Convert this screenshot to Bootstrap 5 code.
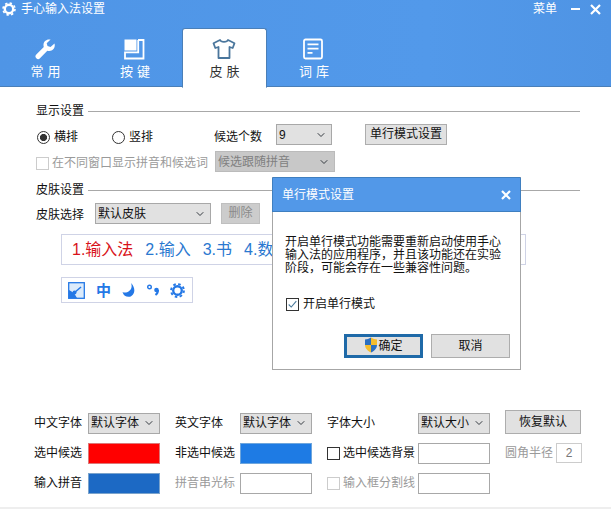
<!DOCTYPE html>
<html lang="zh-CN">
<head>
    <meta charset="UTF-8">
    <meta name="viewport" content="width=device-width, initial-scale=1.0">
    <title>手心输入法设置</title>
    <link href="https://cdn.jsdelivr.net/npm/bootstrap@5.3.1/dist/css/bootstrap.min.css" rel="stylesheet">
    <style>
        html, body {
            height: 509px;
            overflow: hidden;
        }

        body {
            font-family: "Liberation Sans", "Noto Sans CJK SC", sans-serif;
            font-size: 12px;
            line-height: 14px;
            color: #111;
            background: #fff;
            position: relative;
            border-bottom: 2px solid #eee;
        }

        /* header */
        .app-head {
            height: 87px;
            background: linear-gradient(90deg, #4f95e6, #5299ea 70%, #4f94e4);
            border-bottom: 1px solid #4a7fb8;
            color: #fff;
        }

        .title-row {
            height: 28px;
            padding: 0 10px 10px 2px;
        }

        .win-title { margin-left: 5px; }
        .win-min { margin-left: 14px; }
        .win-close { margin-left: 9px; }

        .tab-row {
            gap: 4.5px;
            padding-left: 3px;
            height: 59px;
        }

        .tab-row .nav-link {
            width: 85px;
            height: 60px;
            padding: 9px 0 0 4px;
            color: #fff;
            text-align: center;
            font-size: 13px;
            letter-spacing: 4px;
            border: 1px solid transparent;
            border-radius: 3px 3px 0 0;
        }

        .tab-row .nav-link svg {
            display: block;
            margin: 0 auto 5px;
            transform: translateX(-3px);
        }

        .tab-row .nav-link.active {
            background: #fff;
            color: #333;
            border-color: #4a7fb8;
            border-bottom-color: #fff;
        }

        /* sections */
        .pane {
            padding: 17px 31px 0 36px;
        }

        .sect-head {
            gap: 4px;
            height: 14px;
        }

        .sect-head hr {
            margin: 0;
            opacity: 1;
            border-top: 1px solid #a8a8a8;
        }

        .sect-skin { margin-top: 9.5px; }

        .row-a {
            height: 21px;
            margin-top: 8.5px;
        }

        .row-b {
            height: 21px;
            margin-top: 5px;
        }

        .row-c {
            height: 21px;
            margin-top: 7.5px;
        }

        .muted-txt { color: #9a9a9a; }

        /* spacing of the single controls */
        .radio-first { margin-left: 1px !important; }
        .radio-second { margin-left: 34px !important; }
        .count-label { margin-left: 61px; }
        .count-select { margin: 0 0 5px 14px; }
        .mode-open {
            width: 82px;
            margin: 0 0 6px 33px;
        }
        .check-label { margin-left: 3px; }
        .follow-select { margin: 0 0 3px 7px; }
        .skin-select { margin: 0 0 3px 11px; }
        .skin-del {
            width: 39px;
            margin: 0 0 3px 10px;
        }

        /* form controls */
        .form-check-input.ctl-radio,
        .form-check-input.ctl-check {
            width: 13px;
            height: 13px;
            margin: 0;
            flex: none;
            border: 1px solid #333;
            background-color: #fff;
            box-shadow: none;
        }

        .form-check-input.ctl-radio:checked {
            background-color: #fff;
            border-color: #333;
            background-image: radial-gradient(circle, #333 3.2px, transparent 3.9px);
            background-size: auto;
        }

        .form-check-input.ctl-check { border-radius: 0; }

        .form-check-input.ctl-check:checked {
            background-color: #fff;
            border-color: #333;
            background-image: url("data:image/svg+xml,%3csvg xmlns='http://www.w3.org/2000/svg' viewBox='0 0 13 13'%3e%3cpath fill='none' stroke='%234a7a9c' stroke-width='1.3' d='M2 6.5l3 3 6-7'/%3e%3c/svg%3e");
            background-size: 100% 100%;
        }

        .form-check-input.ctl-check:disabled {
            opacity: 1;
            border-color: #ccc;
            background-color: #fff;
        }

        .form-select.ctl-select {
            height: 21px;
            padding: 0 14px 0 2px;
            border: 1.5px solid #a8a8a8;
            border-radius: 0;
            background-color: #e1e1e1;
            background-position: right 5px center;
            background-size: 10px 8px;
            font-size: 12px;
            line-height: 18px;
            color: #111;
            box-shadow: none;
        }

        .form-select.ctl-select:disabled {
            background-color: #c8c8c8;
            border-color: #bbb;
            color: #808080;
        }

        .w-56 { width: 56px; }
        .w-116 { width: 116px; }
        .w-120 { width: 120px; }

        .btn.ctl-btn {
            height: 21px;
            padding: 0;
            font-size: 12px;
            line-height: 17px;
            color: #111;
            background: #e1e1e1;
            border: 1.5px solid #adadad;
            border-radius: 0;
        }

        .btn.ctl-btn:disabled {
            background: #ccc;
            border-color: #bfbfbf;
            color: #8a8a8a;
            opacity: 1;
        }

        /* skin preview */
        .cand-box {
            width: 465px;
            height: 31px;
            margin: 8.5px 0 0 25px;
            padding-left: 10px;
            border: 1px solid #cfd3e6;
            font-size: 16px;
            white-space: nowrap;
            overflow: hidden;
            color: #2a78d0;
        }

        .cand-box span { margin-right: 12px; }
        .cand-box .cand-on { color: #d8121a; }

        .tool-box {
            width: 132px;
            height: 26px;
            margin: 12px 0 0 25px;
            padding-left: 6px;
            border: 1px solid #cfd3e6;
            gap: 11px;
            color: #2478e6;
        }

        .tool-box b {
            font-size: 15px;
            font-weight: 700;
            line-height: 1;
        }

        /* fonts and colours */
        .style-grid {
            display: grid;
            grid-template-columns: 54px 72px 80px 72px 106px 72px 92px;
            grid-auto-rows: 21px;
            row-gap: 9px;
            margin: 109.5px 0 0 -2px;
        }

        .gap-l { padding-left: 15px; }
        .gap-f { margin-left: 15px; }

        .reset-btn.btn.ctl-btn {
            height: 24px;
            width: 76px;
            margin-top: -1.5px;
        }

        .swatch {
            height: 21px;
            border: 1.5px solid #a8a8a8;
            background: #fff;
        }

        .swatch.fill-red { background: #f00; border-color: #d77; }
        .swatch.fill-mid { background: #1e7be4; border-color: #6ea6dd; }
        .swatch.fill-deep { background: #1c69c4; border-color: #7aa3cc; }

        .radius-box {
            width: 26px;
            height: 20px;
            margin-left: 3px;
            border: 1px solid #ccc;
            color: #777;
            text-align: center;
            line-height: 18px;
        }

        /* dialog */
        .mode-dlg {
            position: absolute;
            left: 272px;
            top: 177px;
            width: 249px;
            height: 193px;
            background: #fff;
            border: 1px solid #a6a6a6;
            border-top-color: #3f7fc0;
        }

        .dlg-head {
            height: 34px;
            padding: 0 9px;
            margin: 0 -1px;
            background: #5298e8;
            border: 1px solid #3f7fc0;
            border-top: 0;
            color: #fff;
        }

        .dlg-text {
            margin: 24px 12px 0 12px;
            line-height: 13px;
        }

        .dlg-opt {
            margin: 22px 0 0 13px;
            gap: 4px;
        }

        .dlg-acts {
            gap: 8px;
            margin: 23px 10px 0 0;
        }

        .dlg-acts .btn.ctl-btn {
            width: 79px;
            height: 24px;
        }

        .dlg-acts .btn.ctl-ok {
            border: 3px solid #1f6aa8;
            line-height: 17px;
        }

        .shield-ic { vertical-align: -3px; }
    </style>
</head>
<body>
    <header class="app-head">
        <div class="title-row d-flex align-items-center">
            <svg width="14" height="14" viewBox="0 0 14 14"><circle cx="7" cy="7" r="4.2" fill="none" stroke="#fff" stroke-width="2.4"/><circle cx="7" cy="7" r="6" fill="none" stroke="#fff" stroke-width="1.6" stroke-dasharray="2.4 2.3"/></svg>
            <span class="win-title">手心输入法设置</span>
            <div class="ms-auto d-flex align-items-center">
                <span>菜单</span>
                <svg class="win-min" width="10" height="10" viewBox="0 0 10 10"><rect y="4" width="9" height="2" fill="#fff"/></svg>
                <svg class="win-close" width="11" height="11" viewBox="0 0 11 11"><path d="M1 1l9 9M10 1l-9 9" stroke="#fff" stroke-width="2.2"/></svg>
            </div>
        </div>
        <ul class="nav tab-row">
            <li class="nav-item">
                <a class="nav-link" href="#">
                    <svg width="22" height="22" viewBox="0 0 22 22"><path fill="#fff" d="M20.5 5.5l-4 3.6-3-1-.8-2.8 3.900-3.700C12.800.6 9.300 3.300 9.500 7.200c0 .7.100 1.300.3 1.900L2.300 16.500a2.600 2.600 0 0 0 3.700 3.700l7.300-7.400c.7.200 1.300.3 2 .3 3.900 0 6.300-3.800 5.200-7.600z"/></svg>
                    常用
                </a>
            </li>
            <li class="nav-item">
                <a class="nav-link" href="#">
                    <svg width="22" height="22" viewBox="0 0 22 22"><path fill="#fff" d="M1.500 1.500h12v11h-12z"/><path fill="none" stroke="#fff" stroke-width="1.800" d="M15 2h5.500v18.500H2v-6.200h13.200V2"/></svg>
                    按键
                </a>
            </li>
            <li class="nav-item">
                <a class="nav-link active" href="#">
                    <svg width="24" height="22" viewBox="0 0 24 22"><path fill="none" stroke="#4a769c" stroke-width="1.800" stroke-linejoin="round" d="M8 2C9 4.500 15 4.500 16 2l6.500 3.200-1.800 4.800-3.200-1V20h-11V9l-3.200 1L1.500 5.200z"/></svg>
                    皮肤
                </a>
            </li>
            <li class="nav-item">
                <a class="nav-link" href="#">
                    <svg width="22" height="22" viewBox="0 0 22 22"><rect x="2" y="1.500" width="18" height="19" rx="1.500" fill="none" stroke="#fff" stroke-width="1.800"/><path fill="#fff" d="M5.500 5.500h11v1.800h-11zM5.500 9.800h11v1.800h-11zM5.500 14h5v1.800h-5z"/></svg>
                    词库
                </a>
            </li>
        </ul>
    </header>

    <main class="pane">
        <div class="sect-head d-flex align-items-center">
            <span>显示设置</span>
            <hr class="flex-grow-1">
        </div>
        <div class="row-a d-flex align-items-center">
            <input class="form-check-input ctl-radio radio-first" type="radio" name="dir" checked>
            <label class="ms-1">横排</label>
            <input class="form-check-input ctl-radio radio-second" type="radio" name="dir">
            <label class="ms-1">竖排</label>
            <span class="count-label">候选个数</span>
            <select class="form-select ctl-select w-56 count-select"><option>9</option></select>
            <button class="btn ctl-btn mode-open" type="button">单行模式设置</button>
        </div>
        <div class="row-b d-flex align-items-center">
            <input class="form-check-input ctl-check" type="checkbox" disabled>
            <label class="muted-txt check-label">在不同窗口显示拼音和候选词</label>
            <select class="form-select ctl-select w-120 follow-select" disabled><option>候选跟随拼音</option></select>
        </div>

        <div class="sect-head sect-skin d-flex align-items-center">
            <span>皮肤设置</span>
            <hr class="flex-grow-1">
        </div>
        <div class="row-c d-flex align-items-center">
            <span>皮肤选择</span>
            <select class="form-select ctl-select w-116 skin-select"><option>默认皮肤</option></select>
            <button class="btn ctl-btn skin-del" type="button" disabled>删除</button>
        </div>

        <div class="cand-box d-flex align-items-center">
            <span class="cand-on">1.输入法</span>
            <span>2.输入</span>
            <span>3.书</span>
            <span>4.数</span>
        </div>
        <div class="tool-box d-flex align-items-center">
            <svg width="17" height="17" viewBox="0 0 17 17"><rect x=".7" y=".7" width="15.6" height="15.6" fill="#dcebfb" stroke="#2478e6" stroke-width="1.3"/><path fill="#2478e6" d="M1 8l5 3 3 5H1z"/><path stroke="#2478e6" stroke-width="1.5" d="M6 11l7-6"/><circle cx="6.5" cy="10.5" r="2" fill="#2478e6"/></svg>
            <b>中</b>
            <svg width="14" height="16" viewBox="0 0 14 16"><path fill="#2478e6" d="M9 1c2 5-1 9-5 9.500-1.300.2-2.500 0-3.500-.5 1 3.500 3.500 5 6.500 4.800C12 14.300 15 7 9 1z"/></svg>
            <svg width="12" height="16" viewBox="0 0 12 16"><circle cx="2.500" cy="5" r="1.800" fill="none" stroke="#2478e6" stroke-width="1.400"/><circle cx="9.500" cy="8" r="2.300" fill="#2478e6"/><path fill="none" stroke="#2478e6" stroke-width="2" d="M11 8c0 2.500-1 4-2.500 5"/></svg>
            <svg width="15" height="15" viewBox="0 0 14 14"><circle cx="7" cy="7" r="4" fill="none" stroke="#2478e6" stroke-width="2.2"/><circle cx="7" cy="7" r="6" fill="none" stroke="#2478e6" stroke-width="1.8" stroke-dasharray="2.4 2.3"/></svg>
        </div>

        <div class="style-grid align-items-center">
            <span>中文字体</span>
            <select class="form-select ctl-select"><option>默认字体</option></select>
            <span class="gap-l">英文字体</span>
            <select class="form-select ctl-select"><option>默认字体</option></select>
            <span class="gap-l">字体大小</span>
            <select class="form-select ctl-select"><option>默认大小</option></select>
            <button class="btn ctl-btn gap-f reset-btn" type="button">恢复默认</button>

            <span>选中候选</span>
            <div class="swatch fill-red"></div>
            <span class="gap-l">非选中候选</span>
            <div class="swatch fill-mid"></div>
            <div class="gap-l d-flex align-items-center">
                <input class="form-check-input ctl-check" type="checkbox">
                <span class="check-label">选中候选背景</span>
            </div>
            <div class="swatch"></div>
            <div class="gap-f d-flex align-items-center muted-txt text-nowrap">
                <span>圆角半径</span>
                <div class="radius-box">2</div>
            </div>

            <span>输入拼音</span>
            <div class="swatch fill-deep"></div>
            <span class="gap-l muted-txt">拼音串光标</span>
            <div class="swatch"></div>
            <div class="gap-l d-flex align-items-center muted-txt">
                <input class="form-check-input ctl-check" type="checkbox" disabled>
                <span class="check-label">输入框分割线</span>
            </div>
            <div class="swatch"></div>
        </div>
    </main>

    <section class="mode-dlg">
        <div class="dlg-head d-flex align-items-center justify-content-between">
            <span>单行模式设置</span>
            <svg width="10" height="10" viewBox="0 0 10 10"><path d="M1 1l8 8M9 1l-8 8" stroke="#fff" stroke-width="2.2"/></svg>
        </div>
        <p class="dlg-text mb-0">开启单行模式功能需要重新启动使用手心输入法的应用程序，并且该功能还在实验阶段，可能会存在一些兼容性问题。</p>
        <div class="dlg-opt d-flex align-items-center">
            <input class="form-check-input ctl-check" type="checkbox" checked>
            <label>开启单行模式</label>
        </div>
        <div class="dlg-acts d-flex justify-content-end">
            <button class="btn ctl-btn ctl-ok" type="button">
                <svg class="shield-ic" width="14" height="16" viewBox="0 0 14 16"><path fill="#2b6fc0" d="M7 .5C5 1.800 3 2.300 1 2.500V8h6z"/><path fill="#f5bd2c" d="M7 .5c2 1.300 4 1.800 6 2V8H7z"/><path fill="#2b6fc0" d="M7 8h6c0 3.500-3 6.200-6 7.500z"/><path fill="#f5bd2c" d="M1 8h6v7.500C4 14.200 1 11.500 1 8z"/></svg>确定
            </button>
            <button class="btn ctl-btn" type="button">取消</button>
        </div>
    </section>

    <script src="https://cdn.jsdelivr.net/npm/bootstrap@5.3.1/dist/js/bootstrap.bundle.min.js"></script>
</body>
</html>
